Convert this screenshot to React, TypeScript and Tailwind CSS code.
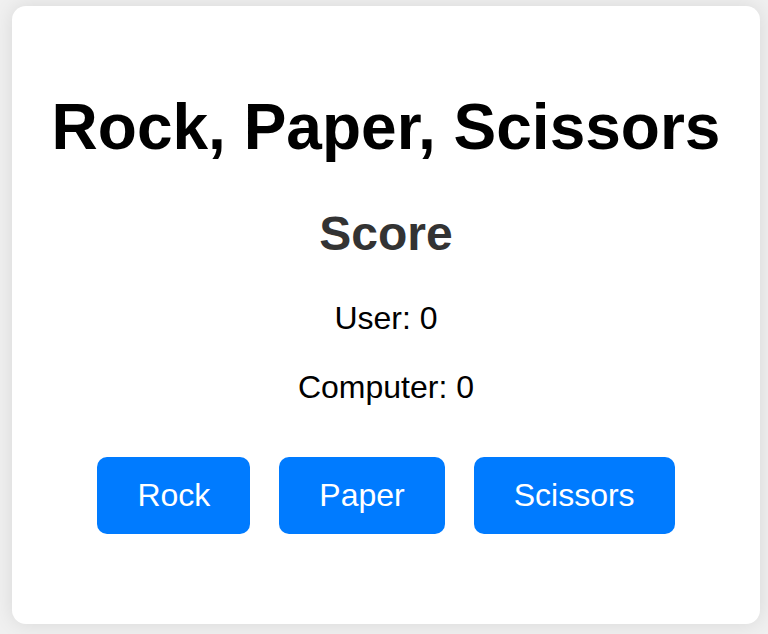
import { useState } from 'react';

const choices = ['Rock', 'Paper', 'Scissors'];

export default function App() {
  const [user, setUser] = useState(0);
  const [computer, setComputer] = useState(0);

  const play = (choice: string) => {
    const pick = choices[Math.floor(Math.random() * 3)];
    if (pick === choice) return;
    const wins =
      (choice === 'Rock' && pick === 'Scissors') ||
      (choice === 'Paper' && pick === 'Rock') ||
      (choice === 'Scissors' && pick === 'Paper');
    if (wins) setUser(u => u + 1);
    else setComputer(c => c + 1);
  };

  return (
    <div className="min-h-screen bg-[#f0f0f0] pt-[6px] pb-[10px] font-['Liberation_Sans',Arial,sans-serif]">
      <div className="ml-[12px] w-[748px] h-[618px] bg-white rounded-[14px] shadow-[0_0_20px_rgba(0,0,0,0.1)] px-[30px] pt-[84px] text-center">
        <h1 className="text-[64px] leading-[74px] font-bold text-black whitespace-nowrap">Rock, Paper, Scissors</h1>
        <h2 className="mt-[42px] text-[48px] leading-[55px] font-bold text-[#333]">Score</h2>
        <p className="mt-[39px] text-[32px] leading-[37px] text-black">User: {user}</p>
        <p className="mt-[32px] text-[32px] leading-[37px] text-black">Computer: {computer}</p>
        <div className="mt-[51px] flex justify-center gap-[29px]">
          {choices.map(c => (
            <button
              key={c}
              onClick={() => play(c)}
              className="bg-[#007bff] text-white text-[32px] leading-[37px] px-[40px] py-[20px] rounded-[10px] cursor-pointer"
            >
              {c}
            </button>
          ))}
        </div>
      </div>
    </div>
  );
}
